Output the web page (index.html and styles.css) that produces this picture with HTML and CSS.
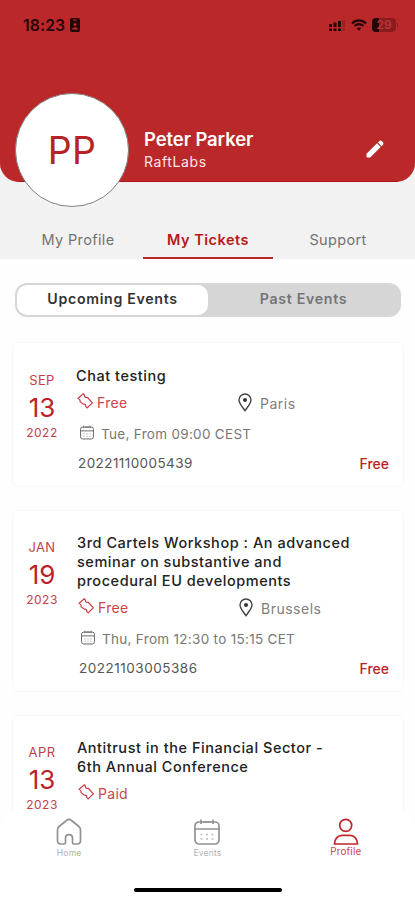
FILE: index.html
```html
<!DOCTYPE html>
<html lang="en">
<head>
<meta charset="utf-8">
<title>My Tickets</title>
<link rel="stylesheet" href="styles.css">
</head>
<body>
<svg class="defs" width="0" height="0">
  <symbol id="ticket" viewBox="0 0 16 16"><path d="M1.100 5.200 6.300.8l1.200 1.300c-.2 1.800 1 2.700 2.700 2.300l.4.200 4.700 5.300-5.100 5-1.500-1.500c.3-1.800-.7-2.600-2.400-2.200L3 8.600c.5-1.600-.2-2.500-1.900-3.400Z"/></symbol>
  <symbol id="pin" viewBox="0 0 14 19"><path d="M7 17.700C4.600 14 1 10.500 1 7a6 6 0 0 1 12 0c0 3.500-3.600 7-6 10.700Z"/><circle class="dot" cx="7" cy="7" r="2"/></symbol>
  <symbol id="cal" viewBox="0 0 26 26"><rect x="1" y="3" width="24" height="22" rx="4"/><path d="M1 10h24M7 .5V5M19 .5V5M9 3h8"/><path class="dots" d="M6.500 15.500h2M12 15.500h2M17.500 15.500h2M6.500 20h2M12 20h2M17.500 20h2"/></symbol>
</svg>
<div class="screen">
  <header class="header">
    <div class="status">
      <span class="time">18:23</span>
      <svg class="badge" width="10" height="14" viewBox="0 0 10 14"><rect width="10" height="14" rx="2"/><path fill="#bb2829" d="M3 1.500h4v1H3zM2 11.500c0-3 6-3 6 0z"/><circle cx="5" cy="6.600" r="1.500" fill="#bb2829"/></svg>
      <svg class="signal" width="16" height="12" viewBox="0 0 16 12"><path d="M0 4h3v3H0zM4.500 2.500h3V7h-3zM9 1h3v6H9zM0 8.500h3V11H0zM4.500 8.500h3V11h-3zM9 8.500h3V11H9z"/><path opacity=".25" d="M13.300 0H16v7h-2.700zM13.300 8.500H16V11h-2.700z"/></svg>
      <svg class="wifi" width="16" height="12" viewBox="0 0 16 12"><path d="M1 4.400c4-4 10-4 14 0M3.600 7c2.500-2.500 6.300-2.500 8.800 0" fill="none" stroke="#250607" stroke-width="2.100"/><path d="m8 11.800-2.400-2.500c1.500-1.100 3.300-1.100 4.800 0z"/></svg>
      <span class="battery">29</span><i class="battery-tip"></i>
    </div>
    <div class="profile">
      <div class="avatar">PP</div>
      <div class="who"><h1 class="name">Peter Parker</h1><p class="org">RaftLabs</p></div>
      <svg class="edit" width="18" height="18" viewBox="0 0 18 18"><path d="M.5 13.800 11 3.300 14.700 7 4.200 17.500H1.500q-1 0-1-1zM11.900 2.400l1.200-1.200c1-1 2.200-.7 3 .1l.6.600c.9.900 1.100 2.100.1 3.100l-1.200 1.200z"/></svg>
    </div>
  </header>
  <nav class="tabs">
    <a class="tab tab-profile">My Profile</a><a class="tab active">My Tickets</a><a class="tab tab-support">Support</a>
  </nav>
  <main class="content">
    <div class="segment"><span class="seg on">Upcoming Events</span><span class="seg past">Past Events</span></div>
    <article class="card first">
      <div class="date"><span class="month">SEP</span><span class="day">13</span><span class="year">2022</span></div>
      <div class="body">
        <h2 class="title">Chat testing</h2>
        <div class="meta"><span class="price"><svg class="i-ticket"><use href="#ticket"/></svg>Free</span><span class="place"><svg class="i-pin"><use href="#pin"/></svg><span class="city">Paris</span></span></div>
        <div class="when"><svg class="i-cal"><use href="#cal"/></svg><span>Tue, From 09:00 CEST</span></div>
        <div class="order"><span class="number">20221110005439</span><b class="total">Free</b></div>
      </div>
    </article>
    <article class="card">
      <div class="date"><span class="month">JAN</span><span class="day">19</span><span class="year">2023</span></div>
      <div class="body shifted">
        <h2 class="title">3rd Cartels Workshop : An advanced<br>seminar on substantive and<br>procedural EU developments</h2>
        <div class="meta"><span class="price"><svg class="i-ticket"><use href="#ticket"/></svg>Free</span><span class="place"><svg class="i-pin"><use href="#pin"/></svg><span class="city">Brussels</span></span></div>
        <div class="when"><svg class="i-cal"><use href="#cal"/></svg><span>Thu, From 12:30 to 15:15 CET</span></div>
        <div class="order"><span class="number wide">20221103005386</span><b class="total">Free</b></div>
      </div>
    </article>
    <article class="card">
      <div class="date"><span class="month">APR</span><span class="day">13</span><span class="year">2023</span></div>
      <div class="body shifted">
        <h2 class="title">Antitrust in the Financial Sector -<br>6th Annual Conference</h2>
        <div class="meta"><span class="price"><svg class="i-ticket"><use href="#ticket"/></svg>Paid</span></div>
      </div>
    </article>
  </main>
  <footer class="bottom">
    <div class="nav">
      <a class="item"><svg width="26" height="28" viewBox="0 0 26 28"><path d="M9.500 24.500V20c0-4.600 7-4.600 7 0v4.500c0 1 .5 1.500 1.300 1.500H21c2.500 0 3.500-1 3.500-3.500V12c0-1.500-.5-2.500-1.600-3.500l-7.400-6c-1.700-1.400-3.300-1.400-5 0l-7.400 6C2 9.500 1.500 10.500 1.500 12v10.500C1.500 25 2.500 26 5 26h3.200c.8 0 1.300-.5 1.300-1.500Z"/></svg><span>Home</span></a>
      <a class="item"><svg width="26" height="28" viewBox="0 -1 26 28"><use href="#cal" width="26" height="26"/></svg><span>Events</span></a>
      <a class="item me"><svg width="26" height="28" viewBox="0 0 26 28"><circle cx="12.700" cy="7.300" r="6"/><path d="M1.500 26c0-5 3.200-8.600 7.500-8.600h8c4.300 0 7.500 3.600 7.500 8.600z"/></svg><span>Profile</span></a>
    </div>
    <div class="home-bar"></div>
  </footer>
</div>
</body>
</html>
```
FILE: styles.css
```css
* { box-sizing: border-box; margin: 0; padding: 0; }
body { background: #fff; font-family: Inter, "Liberation Sans", sans-serif; }
.defs { position: absolute; }
.screen { width: 415px; height: 900px; overflow: hidden; display: flex; flex-direction: column; background: linear-gradient(#f2f2f2 259px, #fefefe 259px); }

.header { flex: none; height: 182px; background: #bb2829; border-radius: 0 0 19px 19px; border-bottom: 1px solid #b31517; }
.status { height: 93px; padding: 18px 17px 0 23px; display: flex; align-items: flex-start; color: #250607; fill: #250607; }
.time { width: 43px; font-size: 15.8px; line-height: 16px; font-weight: 600; letter-spacing: .1px; white-space: nowrap; }
.badge { margin-left: 4px; }
.signal { margin: 2px 6px 0 auto; }
.wifi { margin: 1px 5px 0 0; }
.battery { width: 24px; height: 14px; border-radius: 4px; background: linear-gradient(90deg, #250607 7px, #8b1c1e 7px); color: #bb3436; font-size: 12px; line-height: 14px; font-weight: 600; text-align: center; }
.battery-tip { width: 1px; height: 4px; margin: 5px 0 0 1px; background: #8b1c1e; }

.profile { display: flex; padding-left: 15px; }
.avatar { flex: none; width: 114px; height: 114px; border: 1px solid #858080; border-radius: 50%; background: #fff; color: #b92224; font-size: 37.5px; line-height: 113px; text-align: center; font-weight: 400; letter-spacing: .2px; }
.who { margin: 34px 0 0 15px; color: #fff; }
.name { font-size: 18.5px; line-height: 24px; font-weight: 600; letter-spacing: -.1px; }
.org { margin-top: 1px; font-size: 14px; line-height: 20px; letter-spacing: .6px; color: #fae6e6; }
.edit { margin: 47px 31px 0 auto; fill: #fff; }

.tabs { flex: none; height: 77px; padding: 25px 12px 0 13px; display: grid; grid-template-columns: repeat(3, 130px); }
.tab { text-align: center; font-size: 14.5px; line-height: 65px; height: 52px; letter-spacing: .35px; color: #737373; white-space: nowrap; }
.tab.active { border-bottom: 2px solid #b82628; color: #b91719; font-weight: 600; letter-spacing: .5px; }

.content { height: 553px; flex: none; padding: 24px 11px 0 12px; overflow: hidden; }
.segment { height: 34px; margin: 0 3px 25px; padding: 2px; display: flex; border-radius: 12px; background: #d6d6d6; }
.seg { flex: 1; text-align: center; font-size: 14.2px; line-height: 28px; font-weight: 600; letter-spacing: .68px; color: #747474; }
.seg.on { border-radius: 10px; background: #fff; color: #333; }

.card { display: flex; margin-bottom: 23px; padding: 22px 14px 11px 0; border: 1px solid #f8f8f8; border-radius: 7px; background: #fff; }
.card.first { padding-top: 23px; }
.date { width: 58px; flex: none; padding-top: 5px; display: flex; flex-direction: column; align-items: center; color: #c53e46; }
.month { font-size: 13px; line-height: 18px; letter-spacing: .4px; }
.day { margin-top: 3px; font-size: 26px; line-height: 32px; color: #bd1f26; }
.year { font-size: 12px; line-height: 18px; letter-spacing: .5px; }
.body { flex: 1; padding-left: 5px; }
.shifted { padding-left: 6px; }
.title { font-size: 14.5px; line-height: 19px; font-weight: 500; letter-spacing: .54px; color: #222; white-space: nowrap; }
.meta { display: flex; height: 24px; margin-top: 5px; }
.price { width: 160px; display: flex; align-items: center; font-size: 14px; letter-spacing: .3px; color: #c9444b; }
.i-ticket { width: 16px; height: 16px; margin: -3px 4px 0 1px; fill: none; stroke: #c93c44; stroke-width: 1.2; }
.place { display: flex; align-items: center; }
.i-pin { width: 14px; height: 19px; margin-right: 8px; margin-left: 2px; fill: none; stroke: #444; stroke-width: 1.4; }
.dot { fill: #333; stroke: none; }
.city { padding-top: 3px; font-size: 14px; letter-spacing: .5px; color: #808080; }
.when { height: 24px; margin-top: 8px; padding-left: 4px; display: flex; align-items: center; font-size: 13.5px; letter-spacing: .3px; color: #777; white-space: nowrap; }
.i-cal { width: 14px; height: 15px; margin: -3px 7px 0 0; fill: none; stroke: #666; stroke-width: 1.8; }
.dots { stroke-dasharray: 2 1; opacity: .6; }
.order { height: 24px; margin-top: 5px; padding-left: 2px; display: flex; align-items: center; justify-content: space-between; font-size: 13.5px; color: #555; }
.number { letter-spacing: .42px; }
.number.wide { letter-spacing: .52px; }
.total { font-weight: 500; font-size: 14px; color: #bd1e23; letter-spacing: 0; }

.bottom { flex: none; height: 88px; border-radius: 20px 20px 0 0; background: #fff; }
.nav { height: 77px; padding-top: 6px; display: grid; grid-template-columns: repeat(3, 1fr); }
.item { display: flex; flex-direction: column; align-items: center; font-size: 8.5px; line-height: 12px; letter-spacing: .2px; color: #b2b2b2; fill: none; stroke: #929292; stroke-width: 1.7; }
.item span { margin-top: 1px; }
.item.me { color: #c9444b; stroke: #c0262c; font-size: 9.8px; }
.item.me span { margin-top: 0; }
.home-bar { width: 148px; height: 4px; margin: -1px auto 0; border-radius: 2px; background: #000; }
```
